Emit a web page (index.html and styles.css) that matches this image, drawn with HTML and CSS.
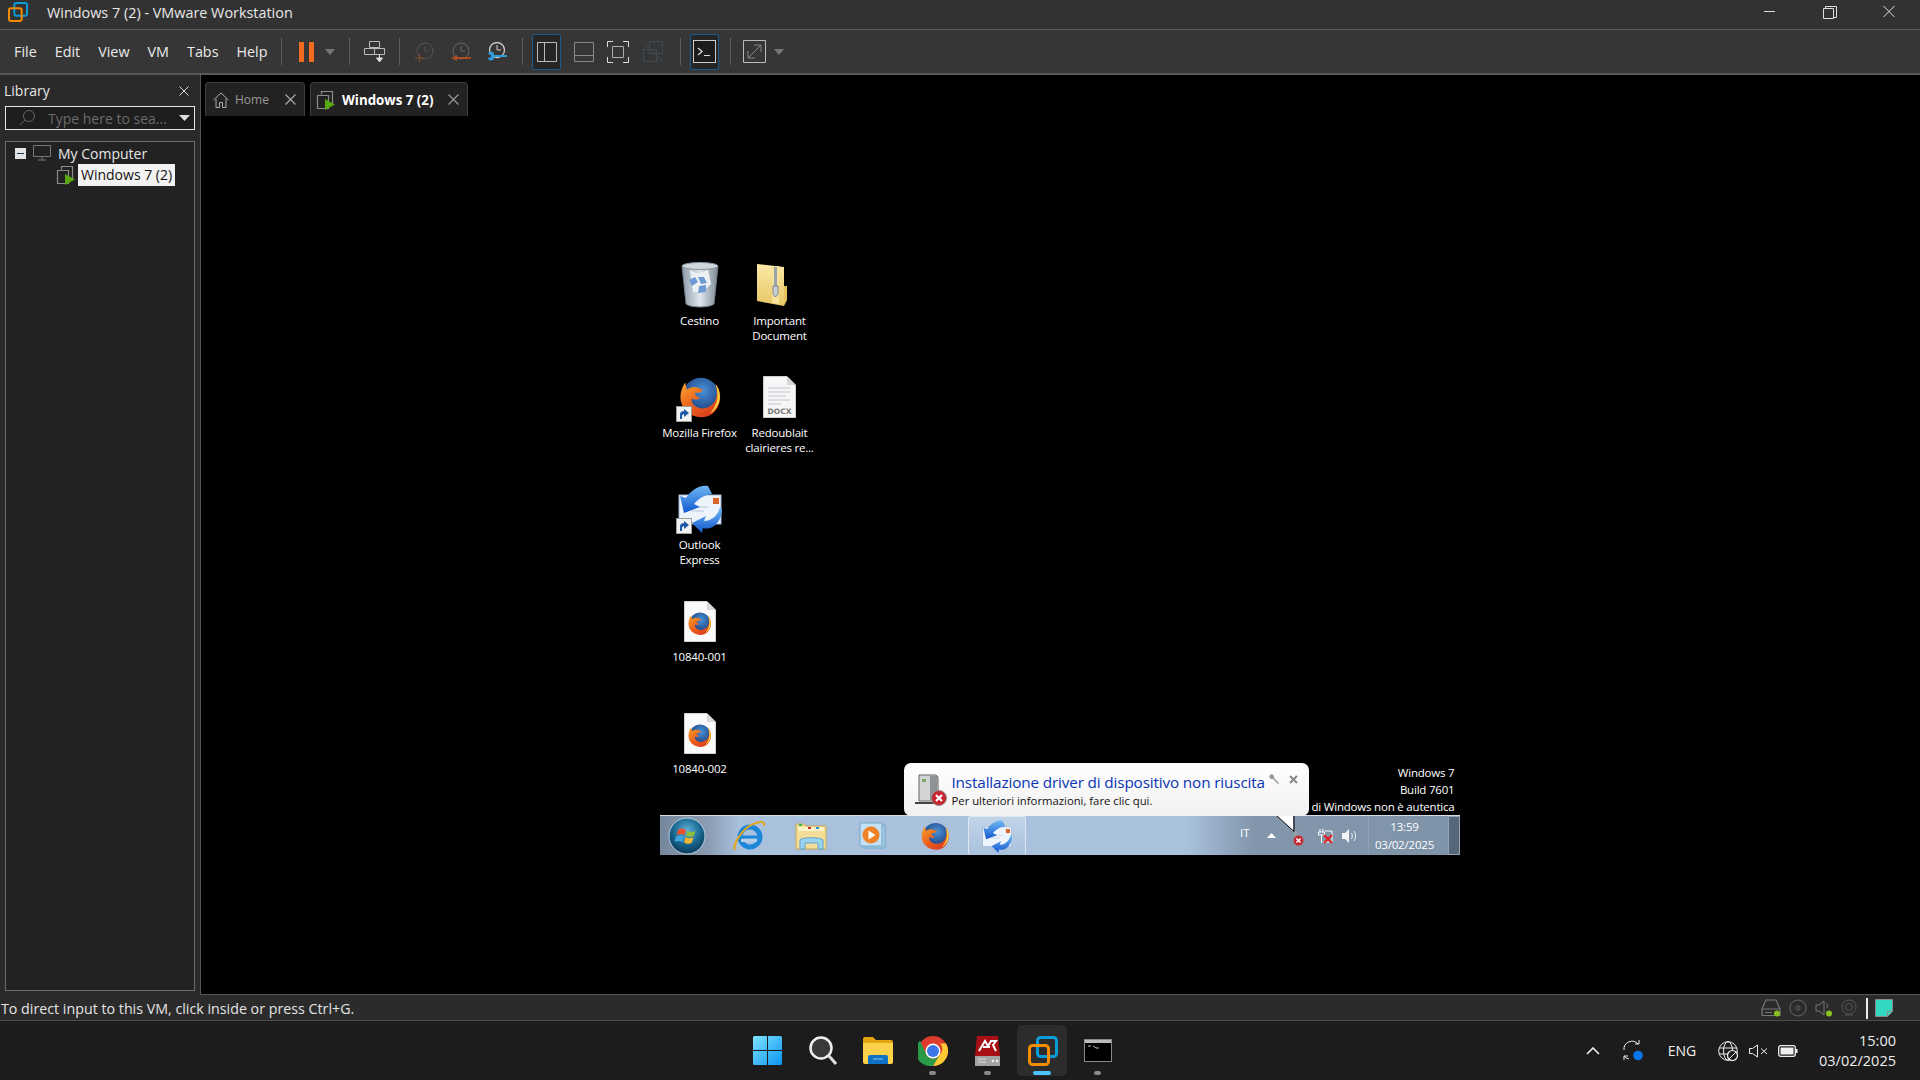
FILE: index.html
```html
<!DOCTYPE html>
<html lang="en">
<head>
<meta charset="utf-8">
<title>Windows 7 (2) - VMware Workstation</title>
<link rel="stylesheet" href="styles.css">
</head>
<body>
<svg class="defs" width="0" height="0" aria-hidden="true">
  <defs>
    <linearGradient id="ffo" x1="0" y1="0" x2="0.8" y2="1"><stop offset="0" stop-color="#f6a52c"/><stop offset=".45" stop-color="#ef6a1f"/><stop offset="1" stop-color="#d8391d"/></linearGradient>
    <radialGradient id="ffb" cx=".55" cy=".35" r=".7"><stop offset="0" stop-color="#4a90d8"/><stop offset="1" stop-color="#14336f"/></radialGradient>
    <linearGradient id="bin" x1="0" y1="0" x2="1" y2="0"><stop offset="0" stop-color="#8c9aa8"/><stop offset=".5" stop-color="#dfe7ee"/><stop offset="1" stop-color="#7d8894"/></linearGradient>
    <linearGradient id="fold" x1="0" y1="0" x2="0" y2="1"><stop offset="0" stop-color="#fbe9a6"/><stop offset="1" stop-color="#e7c766"/></linearGradient>
    <radialGradient id="orb" cx=".5" cy=".35" r=".7"><stop offset="0" stop-color="#5fb2d8"/><stop offset=".55" stop-color="#17668f"/><stop offset="1" stop-color="#0b2f4a"/></radialGradient>
    <linearGradient id="arr" x1="0" y1="0" x2="0" y2="1"><stop offset="0" stop-color="#6fb7f5"/><stop offset="1" stop-color="#1358d0"/></linearGradient>
    <linearGradient id="win" x1="0" y1="0" x2="1" y2="1"><stop offset="0" stop-color="#7fe3ff"/><stop offset="1" stop-color="#0a94f0"/></linearGradient>
    <symbol id="firefox" viewBox="0 0 48 48">
      <circle cx="25" cy="23" r="20" fill="url(#ffb)"/>
      <path d="M8 8C4 14 2 20 3 28c2 12 13 18 23 18 12 0 20-10 20-22 0-6-2-11-5-14 2 6 2 12 0 17-3 7-11 11-18 9-6-2-9-6-8-10 3 1 7 1 9-1-4-2-6-3-5-6 4 1 8-1 8-3-3-1-6-3-9-3-4 0-6 1-8 3-1-3-2-5-2-8z" fill="url(#ffo)"/>
      <path d="M41 10c5 6 6 15 3 22-2 4-5 8-9 10 5-6 9-14 8-22-.2-4-1-7-2-10z" fill="#fad03e"/>
    </symbol>
    <symbol id="shortcut" viewBox="0 0 16 16">
      <rect x=".5" y=".5" width="15" height="15" fill="#f2f2f2" stroke="#9a9a9a"/>
      <path d="M4 13V8c0-2 2-3 4-3V3l5 4-5 4V8c-1 0-2 1-2 2v3z" fill="#1d5aa8"/>
    </symbol>
    <symbol id="error" viewBox="0 0 16 16">
      <circle cx="8" cy="8" r="7.5" fill="#c9252f" stroke="#8e8e8e"/>
      <path d="M5 5l6 6M11 5l-6 6" stroke="#fff" stroke-width="2.2"/>
    </symbol>
    <symbol id="envelope" viewBox="0 0 44 48">
      <rect x="1" y="10" width="42" height="29" fill="#eef4fb" stroke="#9db5d6"/>
      <rect x="35" y="13" width="6" height="6" fill="#d8662c"/>
      <path d="M14 22h16M14 26h12" stroke="#b8c6d8"/>
      <path d="M30 1C22-1 12 6 8 13L2 11l4 17 16-6-6-3c4-5 10-9 18-10z" fill="url(#arr)"/>
      <path d="M42 22c-2 9-9 14-16 14l2-5-14 7 10 10 1-5c10 3 19-7 19-19z" fill="url(#arr)"/>
    </symbol>
    <symbol id="vmware" viewBox="0 0 30 30">
      <rect x="9.5" y="1.5" width="19" height="19" rx="3" fill="none" stroke="#0b9bd7" stroke-width="3"/>
      <rect x="1.5" y="9.5" width="19" height="19" rx="3" fill="none" stroke="#f28c00" stroke-width="3"/>
    </symbol>
    <symbol id="vmrun" viewBox="0 0 20 20">
      <path d="M5.500 4.500V1.500h11v13h-3M1.500 5.500h11v13h-11z" fill="none" stroke="#8c8c8c" stroke-width="1.200"/>
      <path d="M9 9l10 5.500-10 5.500z" fill="#58a80f"/>
    </symbol>
  </defs>
</svg>

<div class="app">
  <header class="titlebar">
    <svg class="logo" width="20" height="20"><use href="#vmware"/></svg>
    <span class="title">Windows 7 (2) - VMware Workstation</span>
    <div class="winctl">
      <svg width="58" height="29" viewBox="0 0 58 29"><path d="M0 11.500h11" stroke="#ddd"/></svg>
      <svg width="61" height="29" viewBox="0 0 61 29"><path d="M1.500 8.500h10v10h-10zM3.500 8V6.500h11v11H12" fill="none" stroke="#ddd"/></svg>
      <svg width="12" height="29" viewBox="0 0 12 29"><path d="M.5 6l11 11M11.500 6l-11 11" stroke="#ddd"/></svg>
    </div>
  </header>

  <nav class="toolbar">
    <div class="menu"><span>File</span><span>Edit</span><span>View</span><span>VM</span><span>Tabs</span><span>Help</span></div>
    <i class="sep"></i>
    <div class="tg tg-pause">
      <svg width="15" height="20" viewBox="0 0 15 20"><path d="M0 0h5v20H0zM10 0h5v20h-5z" fill="#f26a1e"/></svg>
      <svg width="10" height="6" viewBox="0 0 10 6"><path d="M0 0h10L5 6z" fill="#777"/></svg>
    </div>
    <i class="sep"></i>
    <div class="tg tg-snap">
      <svg width="21" height="22" viewBox="0 0 21 22"><path d="M5.500 .5h10v6h-10zM.5 7.500h10v6H.5zM10.500 7.500h10v6h-10z" fill="none" stroke="#bbb"/><path d="M15.500 14v4M12.500 17h6l-3 4z" fill="#ddd" stroke="#ddd"/></svg>
    </div>
    <i class="sep"></i>
    <div class="tg tg-clock">
      <svg width="20" height="20" viewBox="0 0 20 20"><circle cx="10" cy="9" r="8" fill="none" stroke="#555"/><path d="M10 4v5h4" fill="none" stroke="#555"/><path d="M0 16h9M4.500 12v8" stroke="#8b4a2a"/></svg>
      <svg width="20" height="20" viewBox="0 0 20 20"><circle cx="10" cy="9" r="8" fill="none" stroke="#666"/><path d="M10 4v5h4" fill="none" stroke="#666"/><path d="M20 15H6v-2l-6 3 6 3v-2h14z" fill="#a84f24"/></svg>
      <svg width="20" height="20" viewBox="0 0 20 20"><circle cx="10" cy="8" r="7.500" fill="none" stroke="#ccc" stroke-width="1.300"/><path d="M10 3v5h4" fill="none" stroke="#ccc"/><path d="M20 13H7a3 3 0 0 0-6-1l3 1v2l-3 1a3 3 0 0 0 6-1h13z" fill="#2f9bd8"/></svg>
    </div>
    <i class="sep"></i>
    <div class="tg tg-view">
      <span class="boxed"><svg width="20" height="20" viewBox="0 0 20 20"><path d="M.5.5h19v19H.5zM7.500 .5v19" fill="none" stroke="#bbb"/></svg></span>
      <svg width="20" height="20" viewBox="0 0 20 20"><path d="M.5.5h19v19H.5zM.5 13.500h19" fill="none" stroke="#888"/></svg>
      <svg width="22" height="22" viewBox="0 0 22 22"><path d="M.5 6V.5H6M16 .5h5.500V6M21.500 16v5.500H16M6 21.500H.5V16" fill="none" stroke="#ddd"/><path d="M5.500 5.500h11v11h-11z" fill="none" stroke="#aaa"/></svg>
      <svg width="22" height="22" viewBox="0 0 22 22"><path d="M7.500 .5h13v12h-13zM1.500 8.500h13v12h-13z" fill="none" stroke="#3d4a55"/><path d="M1 1l20 20" stroke="#3d4a55"/></svg>
    </div>
    <i class="sep"></i>
    <div class="tg tg-console">
      <span class="boxed"><svg width="23" height="23" viewBox="0 0 23 23"><rect x=".5" y=".5" width="22" height="22" fill="#1c1c1c" stroke="#ccc"/><path d="M5 8l4 3.500-4 3.500" fill="none" stroke="#ddd" stroke-width="1.300"/><path d="M11 15.500h6" stroke="#ddd"/></svg></span>
    </div>
    <i class="sep"></i>
    <div class="tg tg-full">
      <svg width="23" height="23" viewBox="0 0 23 23"><path d="M.5.5h22v22H.5z" fill="none" stroke="#bbb"/><path d="M6 17L17 6M11 5h7v7M5 11v7h7" fill="none" stroke="#888"/></svg>
      <svg width="10" height="6" viewBox="0 0 10 6"><path d="M0 0h10L5 6z" fill="#777"/></svg>
    </div>
  </nav>

  <div class="workspace">
    <aside class="library">
      <div class="lib-head"><span>Library</span><svg width="10" height="10" viewBox="0 0 10 10"><path d="M.5.5l9 9M9.500 .5l-9 9" stroke="#ddd"/></svg></div>
      <div class="lib-search">
        <svg width="18" height="18" viewBox="0 0 18 18"><circle cx="11" cy="7" r="5.500" fill="none" stroke="#666"/><path d="M7 11l-5 5" stroke="#666"/></svg>
        <span class="ph">Type here to sea...</span>
        <svg width="11" height="6" viewBox="0 0 11 6"><path d="M0 0h11L5.500 6z" fill="#ddd"/></svg>
      </div>
      <div class="tree">
        <div class="tree-row">
          <span class="minus"></span>
          <svg width="18" height="16" viewBox="0 0 18 16"><path d="M.5.5h17v11H.5zM9 12v2.500M5 15h8" fill="none" stroke="#777"/></svg>
          <span>My Computer</span>
        </div>
        <div class="tree-row child">
          <svg width="20" height="20"><use href="#vmrun"/></svg>
          <span class="sel">Windows 7 (2)</span>
        </div>
      </div>
    </aside>

    <main class="main">
      <div class="tabs">
        <div class="tab">
          <svg width="16" height="16" viewBox="0 0 16 16"><path d="M.5 8L8 1l7.500 7M3 6.500v9h3.500v-5h3v5H13v-9" fill="none" stroke="#aaa"/></svg>
          <span class="tab-t">Home</span>
          <svg class="tab-x" width="11" height="11" viewBox="0 0 11 11"><path d="M.5.500l10 10M10.500 .5l-10 10" stroke="#aaa" stroke-width="1.200"/></svg>
        </div>
        <div class="tab tab-on">
          <svg width="20" height="20"><use href="#vmrun"/></svg>
          <span class="tab-t">Windows 7 (2)</span>
          <svg class="tab-x" width="11" height="11" viewBox="0 0 11 11"><path d="M.5.500l10 10M10.500 .5l-10 10" stroke="#999" stroke-width="1.200"/></svg>
        </div>
      </div>

      <div class="stage">
        <div class="desktop">
          <div class="icons">
            <div class="ico">
              <div class="pic"><svg width="38" height="46" viewBox="0 0 38 46"><path d="M1 4h36l-4 38c-4 4-24 4-28 0z" fill="url(#bin)" stroke="#6f7a86"/><ellipse cx="19" cy="4" rx="18" ry="3.500" fill="#cfd6dc" stroke="#8a949e"/><path d="M9 8l8 4 10-4 3 14-8 8H12z" fill="#eef1f4"/><path d="M8 18l6-3 3 5-6 4zM18 24l7-1 0 7-8 1zM17 15l6 0 3 6-6 1z" fill="#6f9ad2"/></svg></div>
              <div class="lbl">Cestino</div>
            </div>
            <div class="ico">
              <div class="pic"><svg width="44" height="44"><use href="#firefox"/></svg><svg class="sc" width="16" height="16"><use href="#shortcut"/></svg></div>
              <div class="lbl">Mozilla Firefox</div>
            </div>
            <div class="ico">
              <div class="pic"><svg width="44" height="48"><use href="#envelope"/></svg><svg class="sc" width="16" height="16"><use href="#shortcut"/></svg></div>
              <div class="lbl">Outlook<br>Express</div>
            </div>
            <div class="ico">
              <div class="pic"><svg width="32" height="41" viewBox="0 0 32 41"><path d="M.5.500H23L31.500 9v31.500H.5z" fill="#fafafa" stroke="#d0d0d0"/><path d="M23 .5V9h8.500z" fill="#d9d9d9"/><use href="#firefox" x="3" y="10" width="25" height="25"/></svg></div>
              <div class="lbl">10840-001</div>
            </div>
            <div class="ico">
              <div class="pic"><svg width="32" height="41" viewBox="0 0 32 41"><path d="M.5.500H23L31.500 9v31.500H.5z" fill="#fafafa" stroke="#d0d0d0"/><path d="M23 .5V9h8.500z" fill="#d9d9d9"/><use href="#firefox" x="3" y="10" width="25" height="25"/></svg></div>
              <div class="lbl">10840-002</div>
            </div>
            <div class="ico">
              <div class="pic"><svg class="zipfolder" width="31" height="42" viewBox="0 0 31 42"><path d="M1 0l27 3v39L1 37z" fill="url(#fold)"/><path d="M28 22h3v14l-3 6z" fill="#e5c25c"/><path d="M16 2h7v38l-7-1z" fill="#f6e29a"/><path d="M18 3h3v24h-3z" fill="#9ba3ab"/><path d="M17 22h5v8l-2.500 3-2.500-3z" fill="#c9ced4" stroke="#7d858c"/></svg></div>
              <div class="lbl">Important<br>Document</div>
            </div>
            <div class="ico">
              <div class="pic"><svg width="33" height="42" viewBox="0 0 33 42"><path d="M.5.500H24L32.500 9v32.500H.5z" fill="#f6f6f6" stroke="#cfcfcf"/><path d="M24 .5V9h8.500z" fill="#d6d6d6"/><path d="M5 12h22M5 16h22M5 20h18M5 24h22M5 28h13" stroke="#c6c3cf"/><text x="16.500" y="38" class="docx">DOCX</text></svg></div>
              <div class="lbl">Redoublait<br>clairieres re...</div>
            </div>
          </div>

          <div class="watermark"><div>Windows 7</div><div>Build 7601</div><div>Questa copia di Windows non è autentica</div></div>

          <div class="balloon">
            <svg class="b-ico" width="32" height="32" viewBox="0 0 32 32"><path d="M4 1h17l2 2v24H4z" fill="#d2d4d6" stroke="#666"/><path d="M15 2h7v24h-7z" fill="#8f9296"/><path d="M7 5h4v3H7z" fill="#7ea86e"/><path d="M0 28h20v2H0z" fill="#444"/><use href="#error" x="16" y="16" width="16" height="16"/></svg>
            <div class="b-text">
              <div class="b-h">Installazione driver di dispositivo non riuscita</div>
              <div class="b-s">Per ulteriori informazioni, fare clic qui.</div>
            </div>
            <svg class="b-wrench" width="10" height="10" viewBox="0 0 10 10"><path d="M1 1l2-1 2 2 0 2 5 5-1 1-5-5H2L0 3z" fill="#999"/></svg>
            <svg class="b-close" width="9" height="9" viewBox="0 0 9 9"><path d="M1 1l7 7M8 1L1 8" stroke="#888" stroke-width="2"/></svg>
            <svg class="b-tail" width="22" height="16" viewBox="0 0 22 16"><path d="M0 0h16v15z" fill="#fff"/><path d="M0 0l17 15.500V0" fill="none" stroke="#000"/></svg>
          </div>

          <div class="w7bar">
            <div class="w7apps">
              <span class="w7app"><svg width="38" height="38" viewBox="0 0 38 38"><circle cx="19" cy="19" r="18" fill="url(#orb)" stroke="#b8cfe0"/><path d="M10 13c3-2 5-2 8 0l-1.500 5c-3-1.500-5-1.500-8 0z" fill="#e8522c"/><path d="M19.500 13.500c3 2 5 2 8 0l-1.500 5c-3 2-5 1.500-8 0z" fill="#8cbf3a"/><path d="M8 19.500c3-1.500 5-1.500 8 0L14.500 25c-3-1.500-5-1.500-8 0z" fill="#3fa5dd"/><path d="M17.500 20c3 1.500 5 2 8 0L24 25.500c-3 2-5 1.500-8 0z" fill="#f2b632"/></svg></span>
              <span class="w7app"><svg width="34" height="34" viewBox="0 0 34 34"><circle cx="18" cy="18" r="10" fill="none" stroke="#1c86d9" stroke-width="5"/><path d="M10 18h16" stroke="#1c86d9" stroke-width="3"/><path d="M9 20h16v3H9z" fill="#b4cfe6"/><path d="M3 31C0 27 10 8 24 4c6-2 9-1 8 3" fill="none" stroke="#e3a822" stroke-width="2"/></svg></span>
              <span class="w7app"><svg width="32" height="30" viewBox="0 0 32 30"><path d="M1 3h8l2 2h20v23H1z" fill="#f3dc96" stroke="#c7a95a"/><path d="M3 6h26v4H3z" fill="#fdf3c8"/><path d="M4 3h3v2H4z" fill="#3ab54a"/><path d="M13 6h3v2h-3z" fill="#c0392b"/><path d="M21 6h3v2h-3z" fill="#2d8fd5"/><path d="M5 19c1-3 22-3 23 0v9h-5v-6H10v6H5z" fill="#9bd3ee" stroke="#5aa5cf"/></svg></span>
              <span class="w7app"><svg width="28" height="28" viewBox="0 0 28 28"><path d="M4 3h22v23H4z" fill="#a9cde6" stroke="#6ea7c9"/><path d="M1 1h22v23H1z" fill="#c4e0f2" stroke="#6ea7c9"/><circle cx="12" cy="13" r="8.500" fill="#ef8227"/><path d="M9.500 8.500l7 4.500-7 4.500z" fill="#fff"/></svg></span>
              <span class="w7app"><svg width="30" height="30"><use href="#firefox"/></svg></span>
              <span class="w7app w7on"><svg width="30" height="33"><use href="#envelope"/></svg></span>
            </div>
            <div class="w7tray">
              <span class="t-it">IT</span>
              <svg class="t-up" width="9" height="5" viewBox="0 0 9 5"><path d="M4.500 0L9 5H0z" fill="#fff"/></svg>
              <svg class="t-err" width="14" height="16" viewBox="0 0 14 16"><path d="M4 0h3v12H4z" fill="#9aa0a6"/><use href="#error" x="3" y="5" width="11" height="11"/></svg>
              <svg class="t-net" width="16" height="16" viewBox="0 0 16 16"><path d="M3 1v3M6 1v3M1.500 4h6v3h-6zM4.500 7v8M8 3h7v11H6" fill="none" stroke="#fff"/><path d="M7 7l8 8M15 7l-8 8" stroke="#e02020" stroke-width="2"/></svg>
              <svg class="t-vol" width="16" height="14" viewBox="0 0 16 14"><path d="M0 4h3l4-4v14l-4-4H0z" fill="#f2f4f6"/><path d="M9.500 4c1 1 1 5 0 6M12 2c2 2 2 8 0 10" fill="none" stroke="#eef1f4"/></svg>
              <div class="t-clock"><div>13:59</div><div>03/02/2025</div></div>
              <span class="t-show"></span>
            </div>
          </div>
        </div>
      </div>
    </main>
  </div>

  <div class="status">
    <span class="status-t">To direct input to this VM, click inside or press Ctrl+G.</span>
    <div class="st-icons">
      <svg width="20" height="18" viewBox="0 0 20 18"><path d="M5 1h10l4 9v6.500H1V10zM1 10h18M4 13.500h7" fill="none" stroke="#777" stroke-width="1.200"/><circle cx="16" cy="14.500" r="3" fill="#8cc21f"/></svg>
      <svg width="18" height="18" viewBox="0 0 18 18"><circle cx="9" cy="9" r="8" fill="none" stroke="#666"/><circle cx="9" cy="9" r="2" fill="none" stroke="#666"/></svg>
      <svg width="18" height="18" viewBox="0 0 18 18"><path d="M1 6h3l5-4v14l-5-4H1z" fill="none" stroke="#777"/><path d="M11 4c1 1 2 3 1 5" fill="none" stroke="#777"/><circle cx="14" cy="14.500" r="3" fill="#8cc21f"/></svg>
      <svg width="16" height="18" viewBox="0 0 16 18"><circle cx="8" cy="8" r="7" fill="none" stroke="#555"/><circle cx="8" cy="8" r="3.500" fill="none" stroke="#555"/><path d="M4 16h8" stroke="#555"/></svg>
      <i class="st-div"></i>
      <svg width="18" height="18" viewBox="0 0 18 18"><path d="M.5.500h17v12l-5 5H.5z" fill="#34d8c0" stroke="#8a8a8a"/><path d="M12.500 17.500v-5h5" fill="none" stroke="#8a8a8a"/></svg>
    </div>
  </div>

  <footer class="taskbar">
    <div class="tb-apps">
      <span class="tb-app"><svg width="29" height="29" viewBox="0 0 29 29"><path d="M0 1.500A1.500 1.500 0 0 1 1.500 0H14v14H0zM15 0h12.500A1.500 1.500 0 0 1 29 1.500V14H15zM0 15h14v14H1.500A1.500 1.500 0 0 1 0 27.500zM15 15h14v12.500a1.500 1.500 0 0 1-1.500 1.500H15z" fill="url(#win)"/></svg></span>
      <span class="tb-app"><svg width="28" height="29" viewBox="0 0 28 29"><circle cx="12" cy="12" r="10.500" fill="#3a3a3a" stroke="#eee" stroke-width="2.500"/><path d="M20 20l7 8" stroke="#ddd" stroke-width="3"/></svg></span>
      <span class="tb-app"><svg width="30" height="27" viewBox="0 0 30 27"><path d="M0 2a2 2 0 0 1 2-2h8l3 3h15a2 2 0 0 1 2 2v3H0z" fill="#e2a511"/><path d="M0 6h30v19a2 2 0 0 1-2 2H2a2 2 0 0 1-2-2z" fill="#fcd24a"/><path d="M5 20a2 2 0 0 1 2-2h16a2 2 0 0 1 2 2v7H5z" fill="#0f72c4"/><path d="M10 22h10" stroke="#8cc4ef"/></svg></span>
      <span class="tb-app tb-dot"><svg width="30" height="30" viewBox="0 0 30 30"><circle cx="15" cy="15" r="15" fill="#dd3b2e"/><path d="M28 7.500A15 15 0 0 1 15 30l6.500-11.250A7.500 7.500 0 0 0 22 7.500z" fill="#fcc934"/><path d="M2 4.500A15 15 0 0 0 15 30l6.500-11.250A7.500 7.500 0 0 1 8.500 18.750z" fill="#2a9a49"/><circle cx="15" cy="15" r="7.500" fill="#fff"/><circle cx="15" cy="15" r="6" fill="#3b78e7"/></svg></span>
      <span class="tb-app tb-dot"><svg width="27" height="30" viewBox="0 0 27 30"><path d="M3 0h21l2 20H1z" fill="#a81015"/><path d="M1 20h25v10H1z" fill="#a3a3a3"/><path d="M4 23h8M4 26h8" stroke="#ddd"/><circle cx="19" cy="25" r="1.300" fill="#eee"/><circle cx="23" cy="25" r="1.300" fill="#eee"/><path d="M5 15L11 5l3 5 3-5h5l-3 4 3 6M9 11h7" fill="none" stroke="#fff" stroke-width="2"/></svg></span>
      <span class="tb-app tb-act"><svg width="30" height="30"><use href="#vmware"/></svg></span>
      <span class="tb-app tb-dot"><svg width="28" height="23" viewBox="0 0 28 23"><rect x=".5" y=".5" width="27" height="22" fill="#000" stroke="#888"/><path d="M1 1h26v3H1z" fill="#bbb"/><path d="M4 7h3M9 7l3 2h3" stroke="#bbb"/></svg></span>
    </div>
    <div class="tb-tray">
      <span class="tr tr-chev"><svg width="14" height="8" viewBox="0 0 14 8"><path d="M1 7l6-6 6 6" fill="none" stroke="#eee" stroke-width="1.600"/></svg></span>
      <span class="tr tr-sync"><svg width="20" height="22" viewBox="0 0 20 22"><path d="M1 10a8 8 0 0 1 14-6M16 0v4h-4M1 20v-4h4M1 16a8 8 0 0 0 5 3" fill="none" stroke="#eee"/><circle cx="15" cy="15.500" r="4.800" fill="#0a74e8"/></svg></span>
      <span class="tr tr-eng">ENG</span>
      <span class="tr"><svg width="20" height="20" viewBox="0 0 20 20"><circle cx="10" cy="10" r="9.300" fill="none" stroke="#eee"/><ellipse cx="10" cy="10" rx="4.500" ry="9.300" fill="none" stroke="#eee"/><path d="M1 7h18M1 13h18" stroke="#eee"/><circle cx="14.500" cy="14.500" r="5" fill="#1c1c1c" stroke="#eee" stroke-width="1.200"/><path d="M11 18l7-7" stroke="#eee"/></svg></span>
      <span class="tr"><svg width="19" height="14" viewBox="0 0 19 14"><path d="M.5 4.500h3L8.500 1v12l-5-3.500h-3z" fill="none" stroke="#eee"/><path d="M12 4.500l6 5.500M18 4.500L12 10" stroke="#eee"/></svg></span>
      <span class="tr"><svg width="20" height="12" viewBox="0 0 20 12"><rect x=".7" y=".7" width="16.600" height="10.600" rx="2" fill="none" stroke="#eee" stroke-width="1.300"/><rect x="2.500" y="2.500" width="13" height="7" fill="#eee"/><path d="M18.700 4v4" stroke="#eee" stroke-width="1.600"/></svg></span>
      <div class="clock"><div>15:00</div><div>03/02/2025</div></div>
    </div>
  </footer>
</div>
</body>
</html>
```

FILE: styles.css
```css
* { box-sizing: border-box; }
html, body { margin: 0; height: 100%; background: #000; }
body { font-family: "Open Sans", "Noto Sans", sans-serif; color: #e6e6e6; overflow: hidden; }
svg { display: block; flex: none; }
.defs { position: absolute; }
.app { display: flex; flex-direction: column; height: 1080px; width: 1920px; }

.titlebar { height: 30px; background: #323232; border-bottom: 1px solid #5c5c5c; display: flex; align-items: flex-start; padding-left: 8px; flex: none; }
.logo { margin-top: 2px; }
.title { margin-left: 19px; font-size: 14.400px; line-height: 26px; color: #e8e8e8; }
.winctl { margin-left: auto; display: flex; padding-right: 25px; }

.toolbar { height: 45px; flex: none; background: #363636; border-bottom: 2px solid #585858; display: grid; align-items: center; grid-template-columns: 281px 1px 67px 1px 49px 1px 122px 1px 157px 1px 49px 1px 1fr; }
.menu { display: flex; gap: 18px; padding-left: 14px; font-size: 14.350px; color: #eaeaea; }
.sep { height: 27px; background: #5e5e5e; }
.tg { display: flex; align-items: center; }
.tg-pause { padding-left: 17px; gap: 11px; }
.tg-snap { justify-content: center; }
.tg-clock { padding-left: 15px; gap: 16px; }
.tg-view { padding-left: 9px; gap: 13px; }
.tg-console { padding-left: 9px; }
.tg-full { padding-left: 12px; gap: 8px; }
.boxed { width: 29px; height: 36px; border: 1px solid #1b5a8e; border-radius: 2px; background: #262626; display: flex; align-items: center; justify-content: center; }

.workspace { flex: 1; display: flex; min-height: 0; }
.library { width: 200px; flex: none; background: #2a2a2a; display: flex; flex-direction: column; padding: 0 5px 4px; }
.lib-head { display: flex; align-items: center; justify-content: space-between; height: 31px; padding-right: 6px; font-size: 14px; margin-left: -1px; }
.lib-search { height: 24px; border: 1.500px solid #e4e4e4; background: #1e1e1e; display: flex; align-items: center; padding: 0 4px 0 12px; flex: none; }
.ph { margin-left: 12px; font-size: 14px; color: #6c6c6c; flex: 1; white-space: nowrap; overflow: hidden; }
.tree { flex: 1; margin-top: 11px; background: #222; border: 1px solid #6b6b6b; padding-top: 0; font-size: 14px; }
.tree-row { display: flex; align-items: center; height: 22px; padding-left: 9px; gap: 7px; }
.minus { width: 11px; height: 11px; background: #e4e4e4; position: relative; display: flex; align-items: center; justify-content: center; }
.minus::after { content: ""; width: 7px; height: 1px; background: #234; }
.child { padding-left: 50px; gap: 2px; }
.sel { background: #f2f2f2; color: #111; padding: 0 3px; line-height: 22px; white-space: nowrap; }

.main { flex: 1; display: flex; flex-direction: column; border-left: 1px solid #565656; border-bottom: 1px solid #565656; background: #000; min-width: 0; }
.tabs { height: 41px; flex: none; display: flex; padding: 7px 0 0 4px; gap: 5px; }
.tab { width: 100px; height: 34px; background: #222; border: 1px solid #3e3e3e; border-bottom: 0; border-radius: 4px 4px 0 0; display: flex; align-items: center; padding: 0 8px 0 7px; }
.tab-t { margin-left: 6px; font-size: 12px; color: #999; }
.tab-x { margin-left: auto; }
.tab-on { width: 158px; padding-left: 5px; }
.tab-on .tab-t { font-size: 13.300px; font-weight: 700; color: #fff; margin-left: 6px; }

.stage { flex: 1; display: flex; align-items: center; justify-content: center; min-height: 0; }
.desktop { width: 800px; height: 600px; margin-right: 2px; position: relative; display: flex; flex-direction: column; justify-content: flex-end; }
.icons { position: absolute; left: 0; top: 0; display: grid; grid-auto-flow: column; grid-template-rows: repeat(5, 112px); grid-template-columns: repeat(2, 80px); padding-top: 5px; }
.ico { display: flex; flex-direction: column; align-items: center; }
.pic { height: 50px; position: relative; display: flex; align-items: center; justify-content: center; }
.sc { position: absolute; left: -2px; bottom: 0; }
.zipfolder { margin-right: 16px; }
.lbl { margin-top: 3px; font-size: 11.500px; line-height: 15px; text-align: center; color: #fff; white-space: nowrap; letter-spacing: -.2px; }
.docx { font: 700 7.500px "DejaVu Sans", sans-serif; fill: #777; text-anchor: middle; }

.watermark { position: absolute; right: 5px; top: 509px; font-size: 11.500px; line-height: 17px; text-align: right; color: #fff; letter-spacing: -.2px; }
.balloon { position: absolute; left: 244px; top: 508px; width: 405px; height: 53px; background: linear-gradient(#fff, #f1f1f1); border-radius: 7px; display: flex; align-items: center; padding-left: 11px; color: #111; }
.b-text { margin-left: 5px; padding-top: 3px; }
.b-h { font-size: 15.300px; line-height: 20px; color: #0a35b4; white-space: nowrap; margin-top: -2px; letter-spacing: -.15px; }
.b-s { font-size: 11.300px; line-height: 16px; white-space: nowrap; color: #111; margin-top: 1px; }
.b-wrench { position: absolute; left: 365px; top: 11px; }
.b-close { position: absolute; left: 385px; top: 12px; }
.b-tail { position: absolute; left: 373px; top: 53px; }

.w7bar { height: 40px; flex: none; display: flex; align-items: stretch; justify-content: space-between; border-top: 1px solid #d5dde6; background: linear-gradient(90deg, #76889e 0, #8b9cb2 6%, #a9c1dd 10%, #a9c1dd 66%, #8396ac 74%, #7f93a9 100%); }
.w7apps { display: flex; }
.w7app { width: 62px; display: flex; align-items: center; justify-content: center; }
.w7app:first-child { width: 54px; margin-right: 4px; }
.w7on { width: 58px; margin-left: 2px; border: 1px solid #dfe7f0; border-bottom: 0; border-radius: 3px; background: linear-gradient(#c2d4e8, #a9c1dd); }
.w7tray { display: flex; align-items: center; color: #fff; }
.t-it { font-size: 11.500px; margin-top: -7px; margin-right: 17px; }
.t-up { margin-right: 14px; }
.t-err { margin-right: 13px; margin-top: 5px; }
.t-net { margin-right: 9px; }
.t-vol { margin-right: 10px; }
.t-clock { width: 80px; border-left: 1px solid #8ea1b6; padding-right: 7px; text-align: center; font-size: 11.500px; line-height: 18px; letter-spacing: -.2px; height: 100%; padding-top: 2px; }
.t-show { width: 12px; height: 100%; background: #56677a; border: 1px solid #92a3b5; }

.status { height: 26px; flex: none; background: #2b2b2b; border-bottom: 1px solid #4c4c4c; display: flex; align-items: center; justify-content: space-between; padding: 1px 27px 0 0; }
.status-t { font-size: 14.250px; color: #e4e4e4; padding-left: 1px; }
.st-icons { display: flex; align-items: center; gap: 8px; }
.st-div { width: 2px; height: 21px; background: #eee; margin: 0 -1px 0 1px; }

.taskbar { height: 59px; flex: none; background: #1c1c1c; display: flex; justify-content: space-between; padding-left: 740px; }
.tb-apps { display: flex; }
.tb-app { width: 55px; display: flex; align-items: center; justify-content: center; position: relative; }
.tb-dot::after, .tb-act::after { content: ""; position: absolute; bottom: 5px; left: 24px; width: 7px; height: 4px; border-radius: 2px; background: #8a8a8a; }
.tb-act::before { content: ""; position: absolute; left: 2px; right: 3px; top: 4px; bottom: 4px; background: #2c2c2c; border-radius: 5px; z-index: 0; }
.tb-act svg { position: relative; }
.tb-act::after { left: 18px; width: 18px; background: #4cc2ff; }
.tb-tray { display: flex; align-items: center; padding-right: 24px; }
.tr { width: 30px; display: flex; align-items: center; justify-content: center; }
.tr-chev { width: 36px; }
.tr-sync { width: 40px; padding-left: 4px; }
.tr-eng { width: 62px; font-size: 14px; color: #eee; }
.clock { width: 93px; text-align: right; font-size: 14.500px; line-height: 20px; color: #eee; }
```
